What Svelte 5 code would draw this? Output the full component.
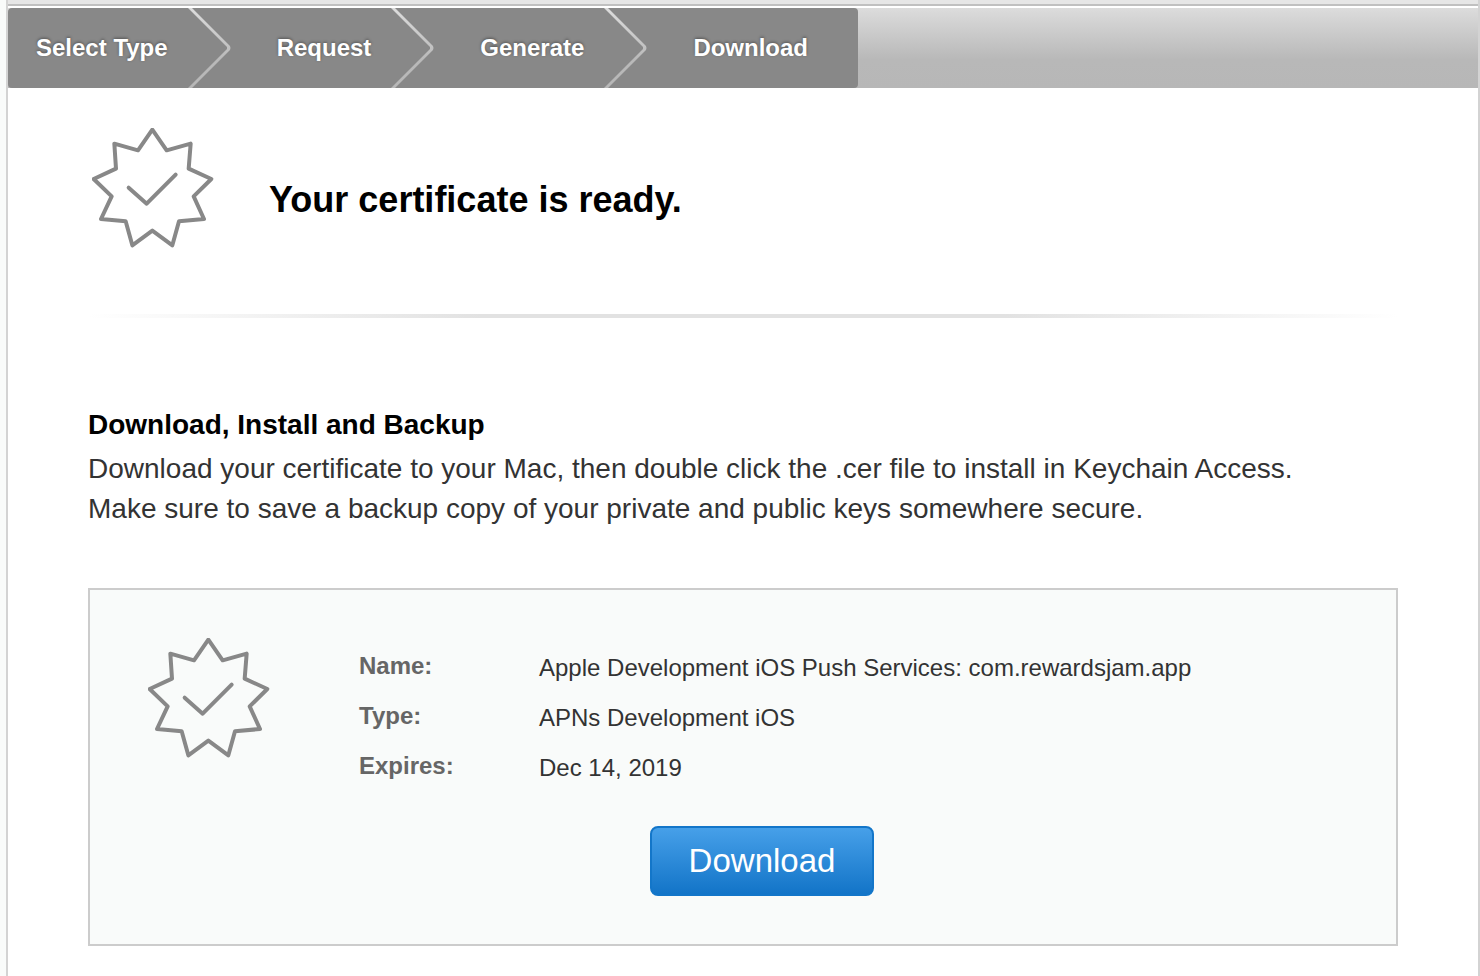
<script>
  const steps = ['Select Type', 'Request', 'Generate', 'Download'];
  const details = [
    ['Name:', 'Apple Development iOS Push Services: com.rewardsjam.app'],
    ['Type:', 'APNs Development iOS'],
    ['Expires:', 'Dec 14, 2019'],
  ];
</script>

{#snippet seal()}
  <svg class="seal" viewBox="36 24 366 360" aria-hidden="true">
    <path d="M217 29 260 91 332 71 326 146 394 177 341 229 372 297 297 304 277 376 217 332 157 376 137 304 63 297 95 229 41 177 108 146 103 71 174 91Z" />
    <path d="M146 203 200 251 287 164" />
  </svg>
{/snippet}

<div class="page">
  <main>
    <div class="band"></div>
    <nav aria-label="Progress">
      <ol>
        {#each steps as step, i}
          <li>
            <span>{step}</span>
            {#if i < steps.length - 1}
              <svg class="chevron" viewBox="0 0 42 80" aria-hidden="true">
                <defs>
                  <linearGradient id="edge{i}" x1="0" y1="0" x2="0" y2="1">
                    <stop offset="0" stop-color="#dcdcdc" />
                    <stop offset="0.65" stop-color="#b9b9b9" />
                    <stop offset="1" stop-color="#b7b7b7" />
                  </linearGradient>
                </defs>
                <path d="M-1 0H3L41 38Q42 40 41 42L3 80H-1L38 41V39Z" fill="url(#edge{i})" />
              </svg>
            {/if}
          </li>
        {/each}
      </ol>
    </nav>

    <div class="content">
      <header>
        {@render seal()}
        <h1>Your certificate is ready.</h1>
      </header>
      <div class="rule"></div>
      <section>
        <h2>Download, Install and Backup</h2>
        <p>
          Download your certificate to your Mac, then double click the .cer file to install in Keychain Access.<br />
          Make sure to save a backup copy of your private and public keys somewhere secure.
        </p>
      </section>
      <div class="card">
        <div class="info">
          {@render seal()}
          <dl>
            {#each details as [label, value]}
              <dt>{label}</dt>
              <dd>{value}</dd>
            {/each}
          </dl>
        </div>
        <button type="button">Download</button>
      </div>
    </div>
  </main>
</div>

<style>
  :global(body) {
    margin: 0;
    background: #f9fbfa;
  }
  .page {
    box-sizing: border-box;
    min-height: 100vh;
    display: flex;
    flex-direction: column;
    padding-left: 6px;
    font-family: 'Liberation Sans', Arial, sans-serif;
    color: #333;
  }
  main {
    flex: 1;
    background: #fff;
    border: solid #d3d3d3;
    border-width: 0 2px;
  }
  .band {
    height: 4px;
    margin-bottom: 2px;
    background: #e6e6e6;
    border-bottom: 2px solid #c0c0c0;
  }
  nav {
    background: linear-gradient(#dcdcdc, #b8b8b8 65%, #b7b7b7);
    display: flex;
  }
  ol {
    display: flex;
    margin: 0;
    padding: 0 50px 0 0;
    list-style: none;
    background: #888;
    border-radius: 4px;
  }
  li {
    display: flex;
    align-items: center;
    height: 80px;
    gap: 21px;
    padding-left: 46px;
    font-size: 24px;
    font-weight: bold;
    color: #fff;
    text-shadow: 0 -1px 3px rgba(0, 0, 0, 0.4);
    white-space: nowrap;
  }
  li:first-child {
    padding-left: 28px;
  }
  .chevron {
    width: 42px;
    height: 80px;
    overflow: visible;
  }
  .content {
    padding: 40px 80px 30px;
  }
  header {
    display: flex;
    align-items: center;
    gap: 55px;
    padding-left: 4px;
  }
  .seal {
    flex: none;
    width: 122px;
    height: 120px;
    fill: none;
    stroke: #888;
    stroke-width: 12;
    stroke-linecap: round;
    stroke-linejoin: round;
  }
  h1 {
    margin: 24px 0 0;
    font-size: 36px;
    line-height: 40px;
    color: #000;
  }
  .rule {
    height: 4px;
    margin: 66px 0 86px;
    background: linear-gradient(90deg, transparent, #e2e2e2 30%, #e2e2e2 70%, transparent);
  }
  h2 {
    margin: 0;
    font-size: 28px;
    line-height: 42px;
    color: #000;
  }
  p {
    margin: 3px 0 0;
    font-size: 28px;
    line-height: 40px;
  }
  .card {
    display: flex;
    flex-direction: column;
    margin-top: 59px;
    padding: 48px 58px;
    border: 2px solid #ccc;
    background: #f9fbfa;
  }
  .info {
    display: flex;
    gap: 89px;
  }
  dl {
    display: grid;
    grid-template-columns: 180px 1fr;
    margin: 4px 0 34px;
    font-size: 24px;
    line-height: 48px;
  }
  dt {
    font-weight: bold;
    color: #666;
  }
  dd {
    margin: 0;
    padding-top: 2px;
  }
  button {
    align-self: center;
    height: 70px;
    margin-left: 38px;
    padding: 0 37px;
    border: 2px solid #1376c9;
    border-radius: 8px;
    background: linear-gradient(#48a1ea, #1173c7) border-box;
    font: 33px/62px 'Liberation Sans', Arial, sans-serif;
    color: #fff;
    cursor: pointer;
  }
</style>
